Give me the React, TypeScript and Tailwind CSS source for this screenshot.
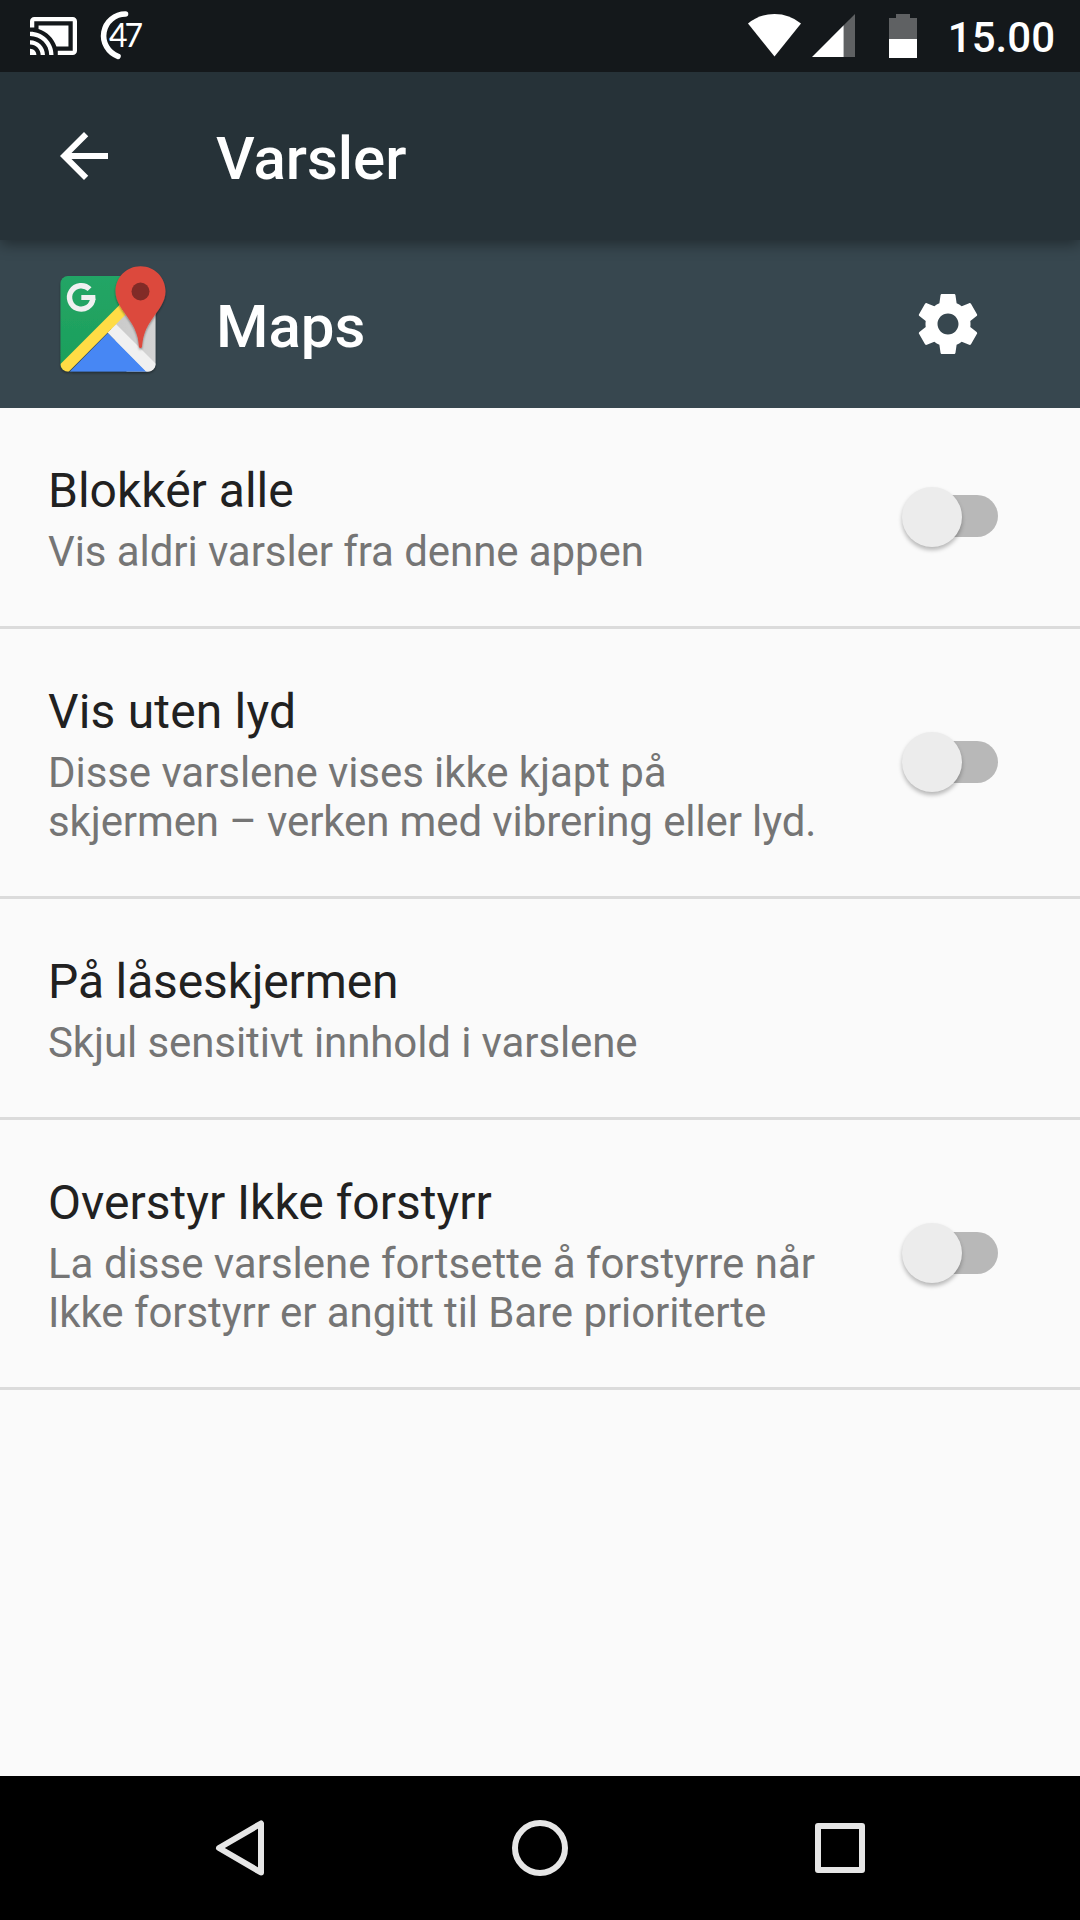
type Line = { text: string; tracking?: string };

type Setting = {
  title: Line;
  summary: Line[];
  toggle: boolean;
};

const settings: Setting[] = [
  {
    title: { text: "Blokkér alle" },
    summary: [{ text: "Vis aldri varsler fra denne appen", tracking: "tracking-[-0.075px]" }],
    toggle: true,
  },
  {
    title: { text: "Vis uten lyd", tracking: "tracking-[0.18px]" },
    summary: [
      { text: "Disse varslene vises ikke kjapt på", tracking: "tracking-[-0.07px]" },
      { text: "skjermen – verken med vibrering eller lyd.", tracking: "tracking-[-0.11px]" },
    ],
    toggle: true,
  },
  {
    title: { text: "På låseskjermen", tracking: "tracking-[-0.14px]" },
    summary: [{ text: "Skjul sensitivt innhold i varslene", tracking: "tracking-[-0.1px]" }],
    toggle: false,
  },
  {
    title: { text: "Overstyr Ikke forstyrr" },
    summary: [
      { text: "La disse varslene fortsette å forstyrre når" },
      { text: "Ikke forstyrr er angitt til Bare prioriterte", tracking: "tracking-[-0.08px]" },
    ],
    toggle: true,
  },
];

function StatusBar() {
  return (
    <div className="relative z-10 flex h-[72px] items-center justify-between bg-[#14181b] pl-[30px] pr-[25px]">
      <div className="flex items-center gap-[23px]">
        <svg className="h-[38px] w-[47px]" viewBox="1 3 22 18" preserveAspectRatio="none" fill="#fff">
          <path d="M1 18v3h3c0-1.66-1.34-3-3-3zm0-4v2c2.76 0 5 2.24 5 5h2c0-3.87-3.13-7-7-7zm18-7H5v1.63c3.96 1.28 7.09 4.41 8.37 8.37H19V7zM1 10v2c4.97 0 9 4.03 9 9h2c0-6.08-4.93-11-11-11zm20-7H3c-1.1 0-2 .9-2 2v3h2V5h18v14h-7v2h7c1.1 0 2-.9 2-2V5c0-1.1-.9-2-2-2z" />
        </svg>
        <svg className="h-[72px] w-[60px] overflow-visible" viewBox="100 0 60 72">
          <path d="M125.5 14A21.8 21.8 0 0 0 118 56.3" fill="none" stroke="#fff" strokeWidth="5.6" strokeLinecap="round" />
          <text x="109" y="47" fill="#fff" fontSize="32" fontFamily="Lato, sans-serif" letterSpacing="-3">
            47
          </text>
        </svg>
      </div>
      <div className="flex items-center">
        <svg className="h-[72px] w-[170px]" viewBox="748 0 170 72">
          <path d="M774.5 56.5L748 23.5Q759.5 14 774.5 14T801 23.5z" fill="#fff" />
          <path d="M843.7 57V25.3L855 14v43z" fill="#5f6163" />
          <path d="M812 57l31.7-31.7V57z" fill="#fff" />
          <path d="M889 39V18h7v-4h14v4h7v21z" fill="#5f6163" />
          <path d="M889 39h28v19h-28z" fill="#fff" />
        </svg>
        <span className="ml-[30px] pt-[2px] text-[42px] font-medium leading-[49px] text-white">15.00</span>
      </div>
    </div>
  );
}

function MapsIcon() {
  return (
    <svg className="h-36 w-36" viewBox="48 252 144 144">
      <defs>
        <clipPath id="tile">
          <rect x="60.5" y="276" width="95" height="95.5" rx="7.5" />
        </clipPath>
        <linearGradient id="green" x1="0" y1="0" x2="0" y2="1">
          <stop offset="0" stopColor="#24a566" />
          <stop offset="1" stopColor="#1b9f5a" />
        </linearGradient>
        <linearGradient id="pinShade" x1="0" y1="0" x2="1" y2="0">
          <stop offset="0" stopColor="#c8c8c8" />
          <stop offset="1" stopColor="#d4d4d4" />
        </linearGradient>
        <filter id="drop" x="-20%" y="-20%" width="140%" height="140%">
          <feDropShadow dx="0" dy="1.5" stdDeviation="1.3" floodColor="#000" floodOpacity="0.4" />
        </filter>
      </defs>
      <g filter="url(#drop)">
        <g clipPath="url(#tile)">
          <path d="M60 275h97v9.5l-97 88z" fill="url(#green)" />
          <path d="M110 325l47-47v95h-30z" fill="url(#pinShade)" />
          <path d="M68.5 373l39.5-40 40 40z" fill="#4687f4" />
          <path d="M107.5 332.5l8.7-8.2L158 366v8h-9.5z" fill="#f0f0f0" />
          <path d="M58 366.5l62-62 5.5 10.3L67.3 373H58z" fill="#ffdc45" />
        </g>
      </g>
      <path d="M89.6 289.2A11.7 11.7 0 1 0 92.9 298.5" fill="none" stroke="#f0f0f0" strokeWidth="5.4" />
      <path d="M81.3 294.9H95.3Q95.5 297.5 95.3 300H81.3z" fill="#f0f0f0" />
      <path
        d="M140.5 266.2c-13.9 0-25 11.2-25 25 0 5.3 1.7 9.8 4.2 14.2 5.8 9.9 14.8 18.7 17.8 31.6.9 3.8 1.1 6.9 1.5 9.7.3 1.7 2.7 1.7 3 0 .4-2.8.6-5.9 1.5-9.7 3-12.9 12-21.7 17.8-31.6 2.5-4.4 4.2-8.9 4.2-14.2 0-13.8-11.1-25-25-25z"
        fill="#dc4a3e"
        filter="url(#drop)"
      />
      <circle cx="140.5" cy="291.5" r="9" fill="#812b27" />
    </svg>
  );
}

function Toggle() {
  return (
    <div className="relative mb-[2px] h-[60px] w-24 shrink-0">
      <div className="absolute right-0 top-[9px] h-[42px] w-[84px] rounded-full bg-[#b8b8b8]" />
      <div className="absolute left-0 top-[0.5px] size-[60px] rounded-full bg-[#ececec] shadow-[0_3px_4px_rgba(0,0,0,0.27)]" />
    </div>
  );
}

function SettingRow({ title, summary, toggle }: Setting) {
  return (
    <div className="flex items-center justify-between border-b-[3px] border-[#dbdbdb] pl-12 pr-[82px]">
      <div className="pb-[50px] pt-[55px]">
        <div className={`text-[48px] leading-[56px] text-[#212121] ${title.tracking ?? ""}`}>{title.text}</div>
        <div className="mt-2 whitespace-nowrap text-[42px] leading-[49px] text-[#757575]">
          {summary.map((line) => (
            <div key={line.text} className={line.tracking}>
              {line.text}
            </div>
          ))}
        </div>
      </div>
      {toggle && <Toggle />}
    </div>
  );
}

function NavBar() {
  return (
    <div className="flex h-36 items-center justify-around bg-black px-[90px]">
      <svg className="size-[72px]" viewBox="0 0 72 72" fill="none" stroke="#e6e6e6" strokeWidth="6" strokeLinejoin="round">
        <path d="M57 11.5V60.5L15 36z" />
      </svg>
      <svg className="size-[72px]" viewBox="0 0 72 72" fill="none" stroke="#e6e6e6" strokeWidth="6">
        <circle cx="36" cy="36" r="25" />
      </svg>
      <svg className="size-[72px]" viewBox="0 0 72 72" fill="none" stroke="#e6e6e6" strokeWidth="6" strokeLinejoin="round">
        <path d="M14 14h44v44H14z" />
      </svg>
    </div>
  );
}

export default function App() {
  return (
    <div className="flex h-[1920px] w-[1080px] flex-col overflow-hidden bg-[#fafafa] font-['Roboto',sans-serif]">
      <StatusBar />

      {/* Toolbar */}
      <div className="relative flex h-[168px] items-center bg-[#263238] pl-12 shadow-[0_4px_14px_rgba(0,0,0,0.4)]">
        <svg className="size-[72px]" viewBox="0 0 24 24" fill="#fff">
          <path d="M20 11H7.83l5.59-5.59L12 4l-8 8 8 8 1.41-1.41L7.83 13H20v-2z" />
        </svg>
        <h1 className="ml-24 pt-[5px] text-[60px] font-medium leading-[70px] text-white">Varsler</h1>
      </div>

      {/* App header */}
      <div className="flex h-[168px] items-center bg-[#37474f] pl-12 pr-24">
        <MapsIcon />
        <h2 className="ml-6 flex-1 pt-[5px] text-[60px] font-medium leading-[70px] text-white">Maps</h2>
        <svg className="size-[72px]" viewBox="0 0 24 24" fill="#fff">
          <path d="M19.43 12.98c.04-.32.07-.64.07-.98s-.03-.66-.07-.98l2.11-1.65c.19-.15.24-.42.12-.64l-2-3.46c-.12-.22-.39-.3-.61-.22l-2.49 1c-.52-.4-1.08-.73-1.69-.98l-.38-2.65C14.46 2.18 14.25 2 14 2h-4c-.25 0-.46.18-.49.42l-.38 2.65c-.61.25-1.17.59-1.69.98l-2.49-1c-.23-.09-.49 0-.61.22l-2 3.46c-.13.22-.07.49.12.64l2.11 1.65c-.04.32-.07.65-.07.98s.03.66.07.98l-2.11 1.65c-.19.15-.24.42-.12.64l2 3.46c.12.22.39.3.61.22l2.49-1c.52.4 1.08.73 1.69.98l.38 2.65c.03.24.24.42.49.42h4c.25 0 .46-.18.49-.42l.38-2.65c.61-.25 1.17-.59 1.69-.98l2.49 1c.23.09.49 0 .61-.22l2-3.46c.12-.22.07-.49-.12-.64l-2.11-1.65zM12 15.5c-1.93 0-3.5-1.57-3.5-3.5s1.57-3.5 3.5-3.5 3.5 1.57 3.5 3.5-1.57 3.5-3.5 3.5z" />
        </svg>
      </div>

      <div className="flex-1">
        {settings.map((setting) => (
          <SettingRow key={setting.title.text} {...setting} />
        ))}
      </div>

      <NavBar />
    </div>
  );
}
